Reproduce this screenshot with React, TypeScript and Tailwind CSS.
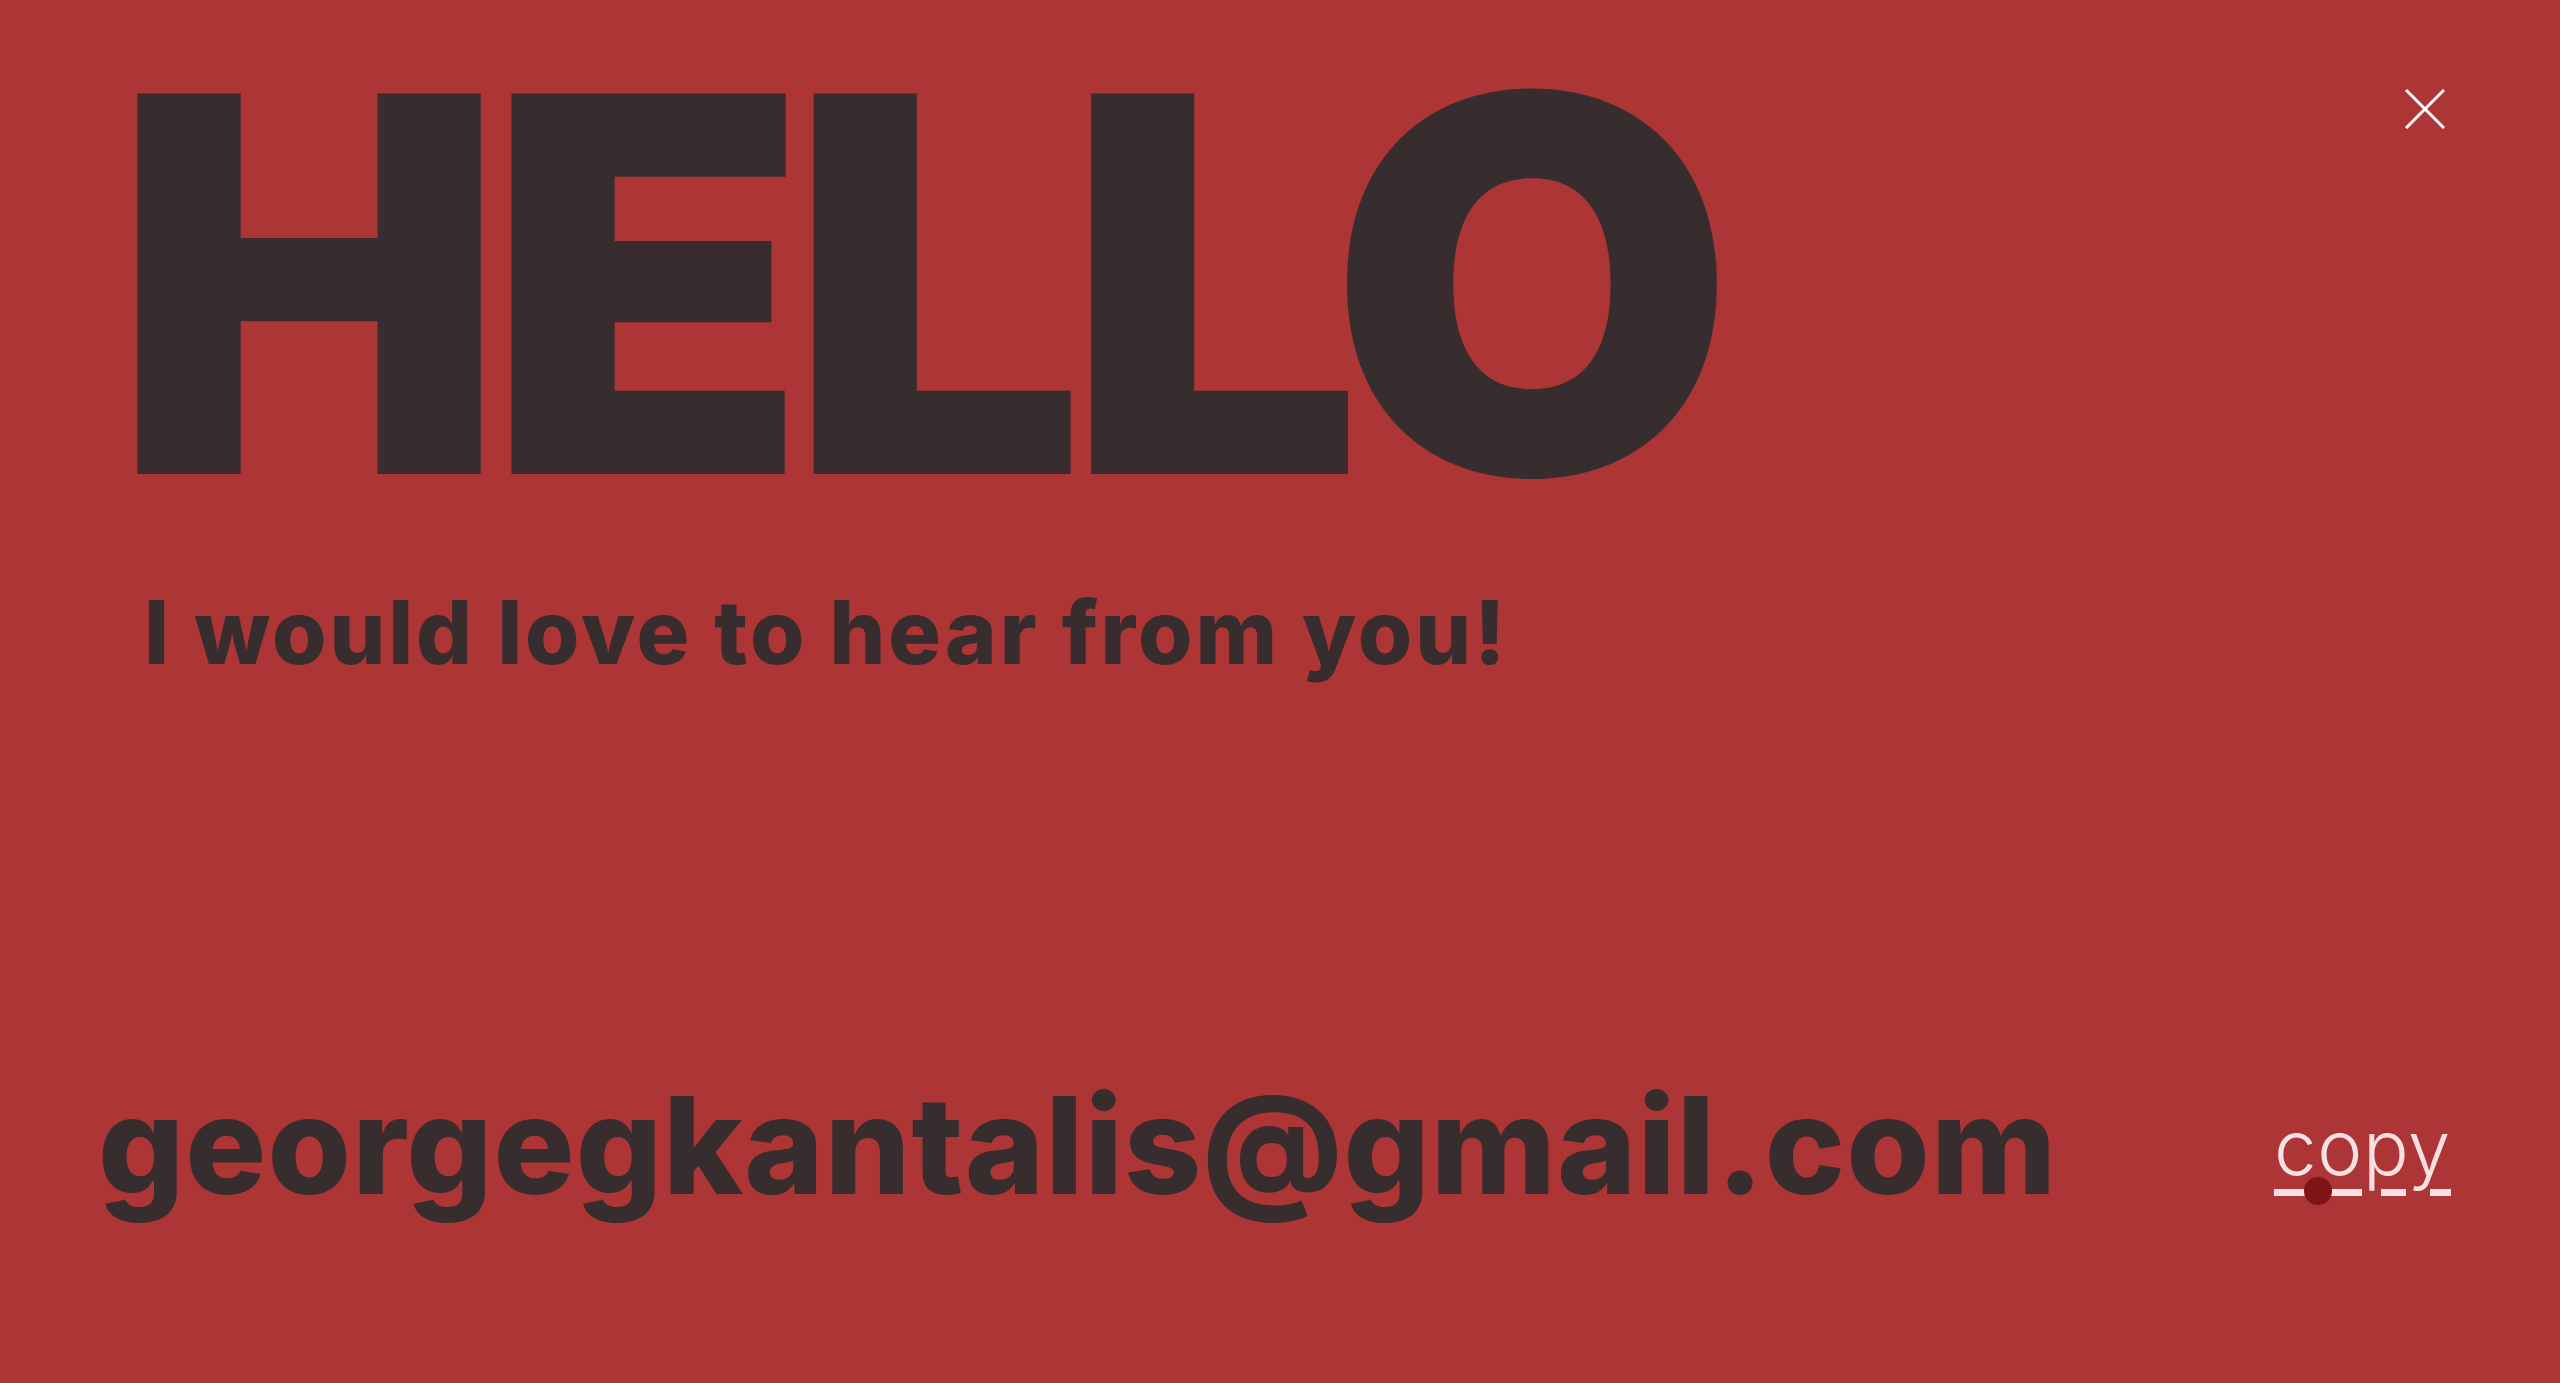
import { useState } from 'react';

export default function App() {
  const [copied, setCopied] = useState(false);
  const email = 'georgegkantalis@gmail.com';

  const handleCopy = () => {
    navigator.clipboard?.writeText(email).catch(() => {});
    setCopied(true);
  };

  return (
    <div className="h-screen w-full overflow-hidden bg-[#ae3536] text-[#372d2e] flex flex-col font-['Inter','Liberation_Sans',sans-serif]">
      {/* Header */}
      <div className="flex justify-between items-start pl-[113px] pr-[115px] pt-[22px]">
        <h1 className="text-[523px] leading-none font-black tracking-[-0.035em] whitespace-nowrap">HELLO</h1>
        <button aria-label="Close" className="mt-[67px] w-[40px] h-[40px] shrink-0 text-white">
          <svg viewBox="0 0 40 40" width="40" height="40" stroke="currentColor" strokeWidth="3">
            <line x1="1" y1="1" x2="39" y2="39" />
            <line x1="39" y1="1" x2="1" y2="39" />
          </svg>
        </button>
      </div>

      <p className="pl-[144px] text-[88px] leading-none font-extrabold tracking-[0.033em] mt-[43px] whitespace-nowrap">
        I would love to hear from you!
      </p>

      {/* Email row */}
      <div className="mt-auto mb-[170px] flex items-end justify-between pl-[98px] pr-[109px]">
        <span className="text-[135px] leading-none font-extrabold tracking-[0.008em] whitespace-nowrap">{email}</span>
        <button
          onClick={handleCopy}
          className="relative mb-[28px] text-[76px] leading-none font-light tracking-[0.01em] text-[#f6e0e1] underline decoration-[7px] underline-offset-[14px]"
        >
          {copied ? 'copied' : 'copy'}
          <span className="absolute left-[30px] top-[68px] w-[28px] h-[28px] rounded-full bg-[#7f1416]" />
        </button>
      </div>
    </div>
  );
}
